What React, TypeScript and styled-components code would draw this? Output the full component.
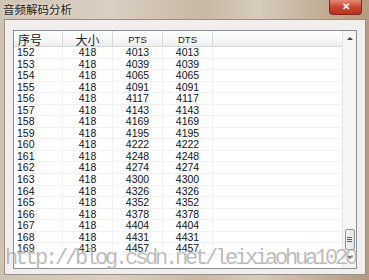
import React from "react";
import styled, { createGlobalStyle } from "styled-components";

const GlobalStyle = createGlobalStyle`
  html, body {
    margin: 0;
    padding: 0;
    width: 369px;
    height: 280px;
    overflow: hidden;
  }
`;

const rows = [
  [152, 418, 4013, 4013],
  [153, 418, 4039, 4039],
  [154, 418, 4065, 4065],
  [155, 418, 4091, 4091],
  [156, 418, 4117, 4117],
  [157, 418, 4143, 4143],
  [158, 418, 4169, 4169],
  [159, 418, 4195, 4195],
  [160, 418, 4222, 4222],
  [161, 418, 4248, 4248],
  [162, 418, 4274, 4274],
  [163, 418, 4300, 4300],
  [164, 418, 4326, 4326],
  [165, 418, 4352, 4352],
  [166, 418, 4378, 4378],
  [167, 418, 4404, 4404],
  [168, 418, 4431, 4431],
  [169, 418, 4457, 4457],
];

const COLS = "49px 50px 50px 50px 1fr";

const Window = styled.div`
  position: relative;
  width: 369px;
  height: 280px;
  box-sizing: border-box;
  display: flex;
  flex-direction: column;
  padding: 0 3px 5px 4px;
  background: linear-gradient(
    90deg,
    #cfc3b3 0%,
    #d9cfc2 30%,
    #c8b9a4 55%,
    #d6cbbd 70%,
    #bfa98f 90%,
    #b49a80 100%
  );
  font-family: "Liberation Sans", "Noto Sans CJK SC", sans-serif;
  overflow: hidden;
`;

const TitleBar = styled.div`
  height: 19px;
  display: flex;
  align-items: flex-start;
  justify-content: space-between;
`;

const Title = styled.span`
  margin: 3px 0 0 -1px;
  font-family: "Noto Sans CJK SC", sans-serif;
  font-size: 11.5px;
  line-height: 12px;
  color: #1a1a1a;
  text-shadow: 0 0 4px rgba(255, 255, 255, 0.9);
`;

const CloseButton = styled.div`
  width: 33px;
  height: 15px;
  margin-right: 4px;
  border: 1px solid #7a2a1e;
  border-top: none;
  border-radius: 0 0 4px 4px;
  box-sizing: border-box;
  background: linear-gradient(180deg, #e48a76 0%, #c9462f 50%, #b8321d 100%);
  display: flex;
  align-items: center;
  justify-content: center;
  color: #fff;
  font-size: 10px;
  font-weight: bold;
  line-height: 1;
`;

const Body = styled.div`
  flex: 1;
  background: #f0efee;
  border: 1px solid #9a8f80;
  box-sizing: border-box;
  padding: 10px 8px 5px 8px;
  display: flex;
`;

const ListView = styled.div`
  flex: 1;
  display: flex;
  background: #fff;
  border: 1px solid #8a8c90;
  overflow: hidden;
`;

const Table = styled.div`
  flex: 1;
  display: flex;
  flex-direction: column;
  overflow: hidden;
`;

const HeaderRow = styled.div`
  display: grid;
  grid-template-columns: ${COLS};
  height: 15px;
  background: linear-gradient(180deg, #ffffff 0%, #f6f7f8 60%, #eceded 100%);
  border-bottom: 1px solid #d6d6d6;
  flex-shrink: 0;
`;

const HeaderCell = styled.div<{ $left?: boolean; $cjk?: boolean }>`
  display: flex;
  align-items: center;
  justify-content: ${(p) => (p.$left ? "flex-start" : "center")};
  padding-left: ${(p) => (p.$left ? "4px" : "0")};
  border-right: 1px solid #d9d9d9;
  font-family: ${(p) =>
    p.$cjk
      ? '"Noto Sans CJK SC", sans-serif'
      : '"Liberation Sans", sans-serif'};
  font-size: ${(p) => (p.$cjk ? "12px" : "9.5px")};
  color: #1a1a1a;
  &:last-child {
    border-right: none;
  }
`;

const Row = styled.div`
  display: grid;
  grid-template-columns: ${COLS};
  height: 11.55px;
  box-sizing: border-box;
  border-bottom: 1px solid #f1f1f1;
  flex-shrink: 0;
`;

const Cell = styled.div<{ $left?: boolean }>`
  display: flex;
  align-items: center;
  justify-content: ${(p) => (p.$left ? "flex-start" : "center")};
  padding-left: ${(p) => (p.$left ? "3px" : "0")};
  border-right: 1px solid #f1f1f1;
  font-size: 10.5px;
  line-height: 1;
  color: #111;
  &:last-child {
    border-right: none;
  }
`;

const ScrollBar = styled.div`
  width: 13px;
  display: flex;
  flex-direction: column;
  align-items: center;
  background: #f6f6f6;
  border-left: 1px solid #e6e6e6;
`;

const Arrow = styled.div<{ $down?: boolean }>`
  width: 0;
  height: 0;
  margin: ${(p) => (p.$down ? "6px 0 9px" : "6px 0 0")};
  border-left: 3px solid transparent;
  border-right: 3px solid transparent;
  ${(p) =>
    p.$down
      ? "border-top: 3px solid #444;"
      : "border-bottom: 3px solid #444;"}
`;

const Track = styled.div`
  flex: 1;
  display: flex;
  flex-direction: column;
  justify-content: flex-end;
`;

const Thumb = styled.div`
  width: 10px;
  height: 21px;
  box-sizing: border-box;
  border: 1px solid #8e9399;
  border-radius: 2px;
  background: linear-gradient(90deg, #f2f2f2 0%, #e2e4e6 100%);
  display: flex;
  flex-direction: column;
  align-items: center;
  justify-content: center;
  gap: 1px;
`;

const Grip = styled.span`
  width: 5px;
  height: 1px;
  background: #5d6166;
`;

const Watermark = styled.div`
  position: absolute;
  left: 5px;
  top: 248px;
  font-family: "Liberation Mono", monospace;
  font-size: 22px;
  line-height: 1;
  letter-spacing: -3.2px;
  color: rgba(130, 130, 130, 0.55);
  text-shadow: 0 0 2px rgba(255, 255, 255, 0.7);
  white-space: nowrap;
  pointer-events: none;
`;

const App = () => {
  return (
    <>
      <GlobalStyle />
      <Window>
        <TitleBar>
          <Title>音频解码分析</Title>
          <CloseButton>✕</CloseButton>
        </TitleBar>
        <Body>
          <ListView>
            <Table>
              <HeaderRow>
                <HeaderCell $left $cjk>
                  序号
                </HeaderCell>
                <HeaderCell $cjk>大小</HeaderCell>
                <HeaderCell>PTS</HeaderCell>
                <HeaderCell>DTS</HeaderCell>
                <HeaderCell />
              </HeaderRow>
              {rows.map((r) => (
                <Row key={r[0]}>
                  <Cell $left>{r[0]}</Cell>
                  <Cell>{r[1]}</Cell>
                  <Cell>{r[2]}</Cell>
                  <Cell>{r[3]}</Cell>
                  <Cell />
                </Row>
              ))}
            </Table>
            <ScrollBar>
              <Arrow />
              <Track>
                <Thumb>
                  <Grip />
                  <Grip />
                  <Grip />
                </Thumb>
              </Track>
              <Arrow $down />
            </ScrollBar>
          </ListView>
        </Body>
        <Watermark>http://blog.csdn.net/leixiaohua1020</Watermark>
      </Window>
    </>
  );
};

export default App;
